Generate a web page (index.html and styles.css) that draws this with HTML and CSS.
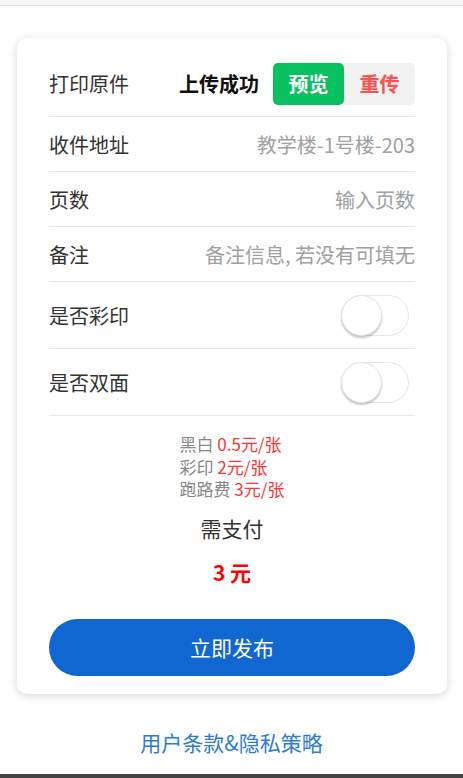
FILE: index.html
```html
<!DOCTYPE html>
<html lang="zh-CN">
<head>
    <meta charset="UTF-8">
    <meta name="viewport" content="width=device-width, initial-scale=1.0">
    <title>发布打印</title>
    <link rel="stylesheet" href="styles.css">
</head>
<body>
    <div class="topbar"></div>

    <div class="card">
        <div class="row row-first">
            <span class="label">打印原件</span>
            <div class="upload">
                <span class="upload-status">上传成功</span>
                <button class="btn-preview">预览</button>
                <button class="btn-reupload">重传</button>
            </div>
        </div>
        <div class="row">
            <span class="label">收件地址</span>
            <input class="field" type="text" placeholder="教学楼-1号楼-203">
        </div>
        <div class="row">
            <span class="label">页数</span>
            <input class="field" type="text" placeholder="输入页数">
        </div>
        <div class="row">
            <span class="label">备注</span>
            <input class="field" type="text" placeholder="备注信息, 若没有可填无">
        </div>
        <div class="row row-switch">
            <span class="label">是否彩印</span>
            <label class="switch"><input type="checkbox"><span class="knob"></span></label>
        </div>
        <div class="row row-switch">
            <span class="label">是否双面</span>
            <label class="switch"><input type="checkbox"><span class="knob"></span></label>
        </div>

        <div class="prices">
            <div>黑白 <span class="price">0.5元/张</span></div>
            <div>彩印 <span class="price">2元/张</span></div>
            <div>跑路费 <span class="price">3元/张</span></div>
        </div>

        <div class="need">需支付</div>
        <div class="total">3 元</div>

        <button class="btn-submit">立即发布</button>
    </div>

    <div class="footer">
        <a href="#">用户条款&amp;隐私策略</a>
    </div>

    <div class="bottombar"></div>
</body>
</html>
```

FILE: styles.css
```css
* {
    box-sizing: border-box;
}
body {
    margin: 0;
    background-color: #fff;
    font-family: "Noto Sans CJK SC", "Noto Sans", sans-serif;
    color: #333;
    height: 778px;
    position: relative;
    overflow: hidden;
}
.topbar {
    height: 6px;
    background-color: #f5f5f5;
    border-bottom: 1px solid #dfe3e2;
}
.card {
    margin: 32px 16px 0 17px;
    padding: 13px 32px 18px;
    background-color: #fff;
    border-radius: 10px;
    box-shadow: 0 2px 10px rgba(0, 0, 0, 0.16);
}
.row {
    display: flex;
    align-items: center;
    justify-content: space-between;
    height: 55px;
    border-bottom: 1px solid #e8e8e8;
}
.row-first {
    height: 66px;
}
.row-switch {
    height: 67px;
}
.label {
    font-size: 20px;
    color: #333;
    white-space: nowrap;
}
.upload {
    display: flex;
    align-items: center;
}
.upload-status {
    font-size: 20px;
    font-weight: bold;
    color: #111;
    margin-right: 14px;
}
.btn-preview,
.btn-reupload {
    width: 71px;
    height: 42px;
    border: none;
    font-family: inherit;
    font-size: 20px;
    font-weight: bold;
    padding: 0;
    cursor: pointer;
}
.btn-preview {
    background-color: #07c160;
    color: #fff;
    border-radius: 5px;
}
.btn-reupload {
    background-color: #f2f2f2;
    color: #fa5151;
    border-radius: 0 5px 5px 0;
}
.field {
    flex: 1;
    min-width: 0;
    border: none;
    outline: none;
    text-align: right;
    font-family: inherit;
    font-size: 20px;
    color: #333;
    padding: 0;
    background: transparent;
}
.field::placeholder {
    color: #a0a0a0;
}
.switch {
    position: relative;
    display: inline-block;
    width: 68px;
    height: 41px;
    margin-right: 6px;
    border: 1px solid #e6e6e6;
    border-radius: 21px;
    background-color: #fff;
}
.switch input {
    display: none;
}
.knob {
    position: absolute;
    top: -1px;
    left: -1px;
    width: 41px;
    height: 41px;
    border-radius: 50%;
    background-color: #fff;
    border: 1px solid #e2e2e2;
    box-shadow: 0 2px 2px rgba(0, 0, 0, 0.22);
}
.prices {
    width: fit-content;
    margin: 17px auto 0;
    font-size: 17px;
    line-height: 22.5px;
    color: #888;
}
.price {
    color: #ff3333;
}
.need {
    margin-top: 13px;
    text-align: center;
    font-size: 21px;
    line-height: 28px;
    color: #333;
}
.total {
    margin-top: 16px;
    text-align: center;
    font-size: 21px;
    font-weight: bold;
    line-height: 28px;
    color: #ff0000;
}
.btn-submit {
    display: block;
    width: 100%;
    height: 57px;
    margin-top: 33px;
    border: none;
    border-radius: 29px;
    background-color: #1167d1;
    color: #fff;
    font-family: inherit;
    font-size: 21px;
    cursor: pointer;
}
.footer {
    margin-top: 34px;
    text-align: center;
    font-size: 21px;
    line-height: 28px;
}
.footer a {
    color: #2d7bd9;
    text-decoration: none;
}
.bottombar {
    position: absolute;
    left: 0;
    right: 0;
    bottom: 0;
    height: 4px;
    background-color: #444;
}
```
